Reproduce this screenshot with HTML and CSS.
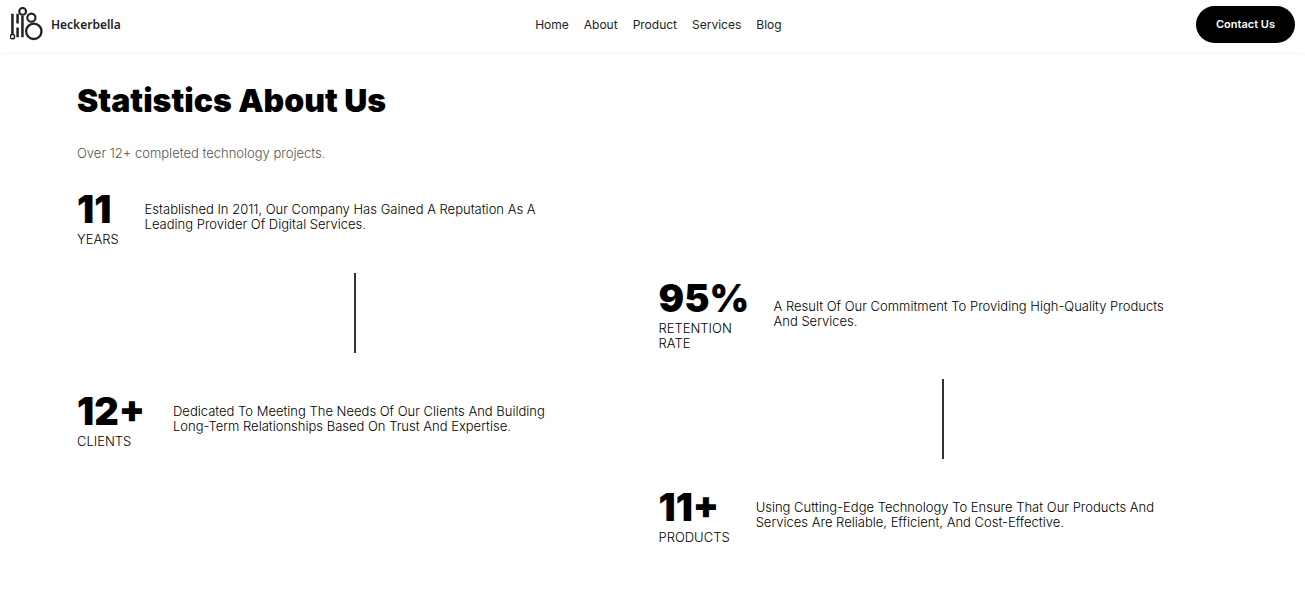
FILE: index.html
```html
<!DOCTYPE html>
<html lang="en">
<head>
<meta charset="utf-8">
<meta name="viewport" content="width=device-width, initial-scale=1">
<title>Heckerbella</title>
<link rel="stylesheet" href="styles.css">
</head>
<body>
<header class="header">
  <a class="brand" href="#">
    <svg class="brand-mark" viewBox="0 0 36 36" aria-hidden="true" fill="none" stroke="#222">
      <path d="M2.500 7V28M7.800 7V17M7.800 21V31M12.800 9V31" stroke-width="2.600"/>
      <circle cx="2.500" cy="30.500" r="2.200" stroke-width="1.500"/>
      <circle cx="13" cy="4.500" r="3.500" stroke-width="2.200"/>
      <circle cx="22" cy="11" r="4.200" stroke-width="2.200"/>
      <circle cx="24.500" cy="25" r="7.900" stroke-width="2.400"/>
    </svg>
    <span>Heckerbella</span>
  </a>
  <nav class="nav" aria-label="Main">
    <a href="#">Home</a>
    <a href="#">About</a>
    <a href="#">Product</a>
    <a href="#">Services</a>
    <a href="#">Blog</a>
  </nav>
  <button class="contact" type="button">Contact Us</button>
</header>
<main class="stats">
  <h1 class="title">Statistics About Us</h1>
  <p class="lead">Over 12+ completed technology projects.</p>
  <div class="columns">
    <div class="column">
      <section class="stat">
        <div class="figure"><strong class="number">11</strong><span class="label">YEARS</span></div>
        <p class="text">Established In 2011, Our Company Has Gained A Reputation As A Leading Provider Of Digital Services.</p>
      </section>
      <div class="divider"></div>
      <section class="stat">
        <div class="figure figure-medium"><strong class="number">12+</strong><span class="label">CLIENTS</span></div>
        <p class="text">Dedicated To Meeting The Needs Of Our Clients And Building Long-Term Relationships Based On Trust And Expertise.</p>
      </section>
    </div>
    <div class="column column-offset">
      <section class="stat">
        <div class="figure figure-wrap"><strong class="number">95%</strong><span class="label">RETENTION RATE</span></div>
        <p class="text">A Result Of Our Commitment To Providing High-Quality Products And Services.</p>
      </section>
      <div class="divider"></div>
      <section class="stat">
        <div class="figure figure-medium"><strong class="number">11+</strong><span class="label">PRODUCTS</span></div>
        <p class="text">Using Cutting-Edge Technology To Ensure That Our Products And Services Are Reliable, Efficient, And Cost-Effective.</p>
      </section>
    </div>
  </div>
</main>
</body>
</html>
```
FILE: styles.css
```css
* { box-sizing: border-box; }
body {
  margin: 0;
  background: #fff;
  color: #000;
  font: 300 13px/15px Inter, sans-serif;
}
h1, p { margin: 0; }
a { color: inherit; text-decoration: none; }

.header {
  display: flex;
  justify-content: space-between;
  align-items: center;
  padding: 6px 10px 9px;
  box-shadow: 0 1px 6px rgba(0, 0, 0, 0.06);
}
.brand {
  display: flex;
  align-items: center;
  gap: 6px;
  color: #222;
  font: 600 12px/16px "Noto Sans", sans-serif;
}
.brand-mark { width: 35px; height: 35px; }
.nav {
  display: flex;
  gap: 15px;
  color: #222;
  font-size: 12px;
  font-weight: 400;
}
.contact {
  padding: 11px 20px;
  border: 0;
  border-radius: 20px;
  background: #000;
  color: #fff;
  font: 600 11px/15px Inter, sans-serif;
}

.stats { padding: 29px 77px 40px; }
.title { font-size: 32px; font-weight: 900; line-height: 40px; }
.lead { margin-top: 25px; color: #555; }
.columns {
  display: grid;
  grid-template-columns: 1fr 1fr;
  gap: 12px;
  margin-top: 26px;
}
.column { padding-right: 14px; }
.column-offset { padding: 89px 0 0; }
.stat { display: flex; align-items: center; gap: 26px; }
.figure { flex: none; }
.figure-medium { min-width: 70px; }
.figure-wrap { width: 89px; }
.number {
  display: block;
  font-size: 38px;
  font-weight: 900;
  line-height: 45px;
}
.label { display: block; }
.text { max-width: 400px; }
.divider {
  width: 2px;
  height: 80px;
  margin: 26px auto 36px;
  background: #333;
}
.column-offset .divider { margin: 28px auto 26px; }
```
